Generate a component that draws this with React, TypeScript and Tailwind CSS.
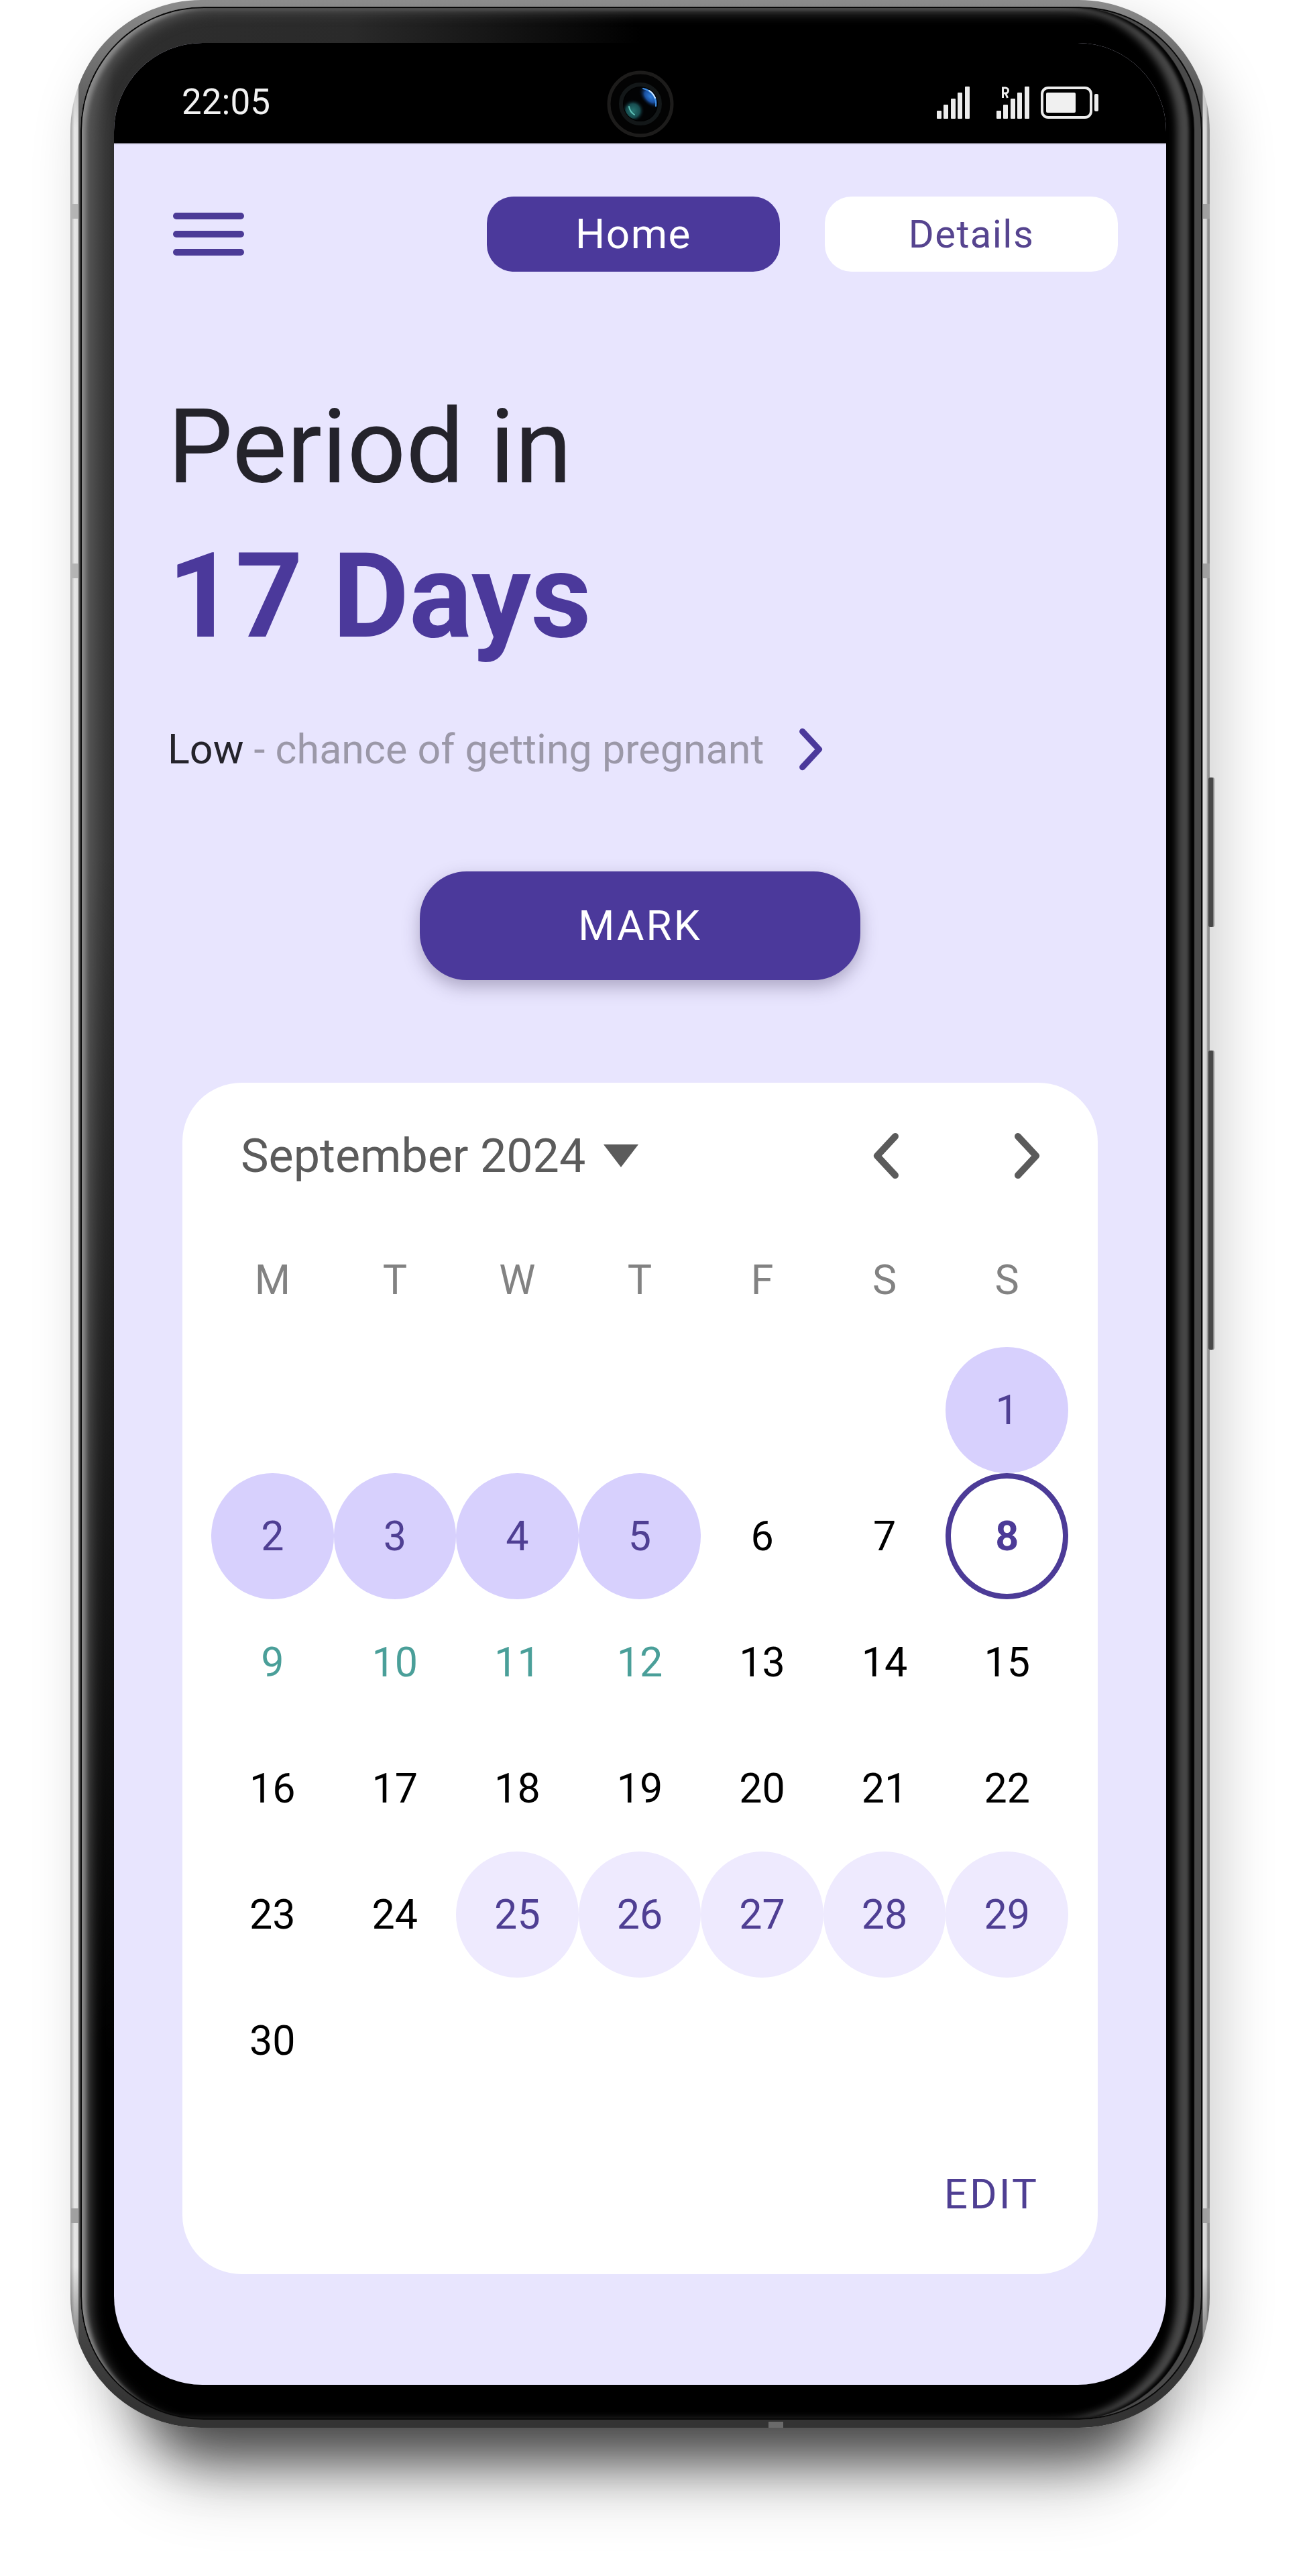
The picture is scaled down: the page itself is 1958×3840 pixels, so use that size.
import React from 'react';

type DayKind = 'plain' | 'period' | 'today' | 'fertile' | 'predicted';

const kinds: Record<number, DayKind> = {
  1: 'period', 2: 'period', 3: 'period', 4: 'period', 5: 'period',
  8: 'today',
  9: 'fertile', 10: 'fertile', 11: 'fertile', 12: 'fertile',
  25: 'predicted', 26: 'predicted', 27: 'predicted', 28: 'predicted', 29: 'predicted',
};

const kindClasses: Record<DayKind, string> = {
  plain: 'text-black',
  period: 'bg-[#d7d0fd] text-[#4f3f93]',
  today: 'border-8 border-[#4c3b97] font-bold text-[#4c3b97]',
  fertile: 'text-[#4a9f99]',
  predicted: 'bg-[#eeeafe] text-[#4f3f93]',
};

const weekdays = [
  ['M', 'Monday'], ['T', 'Tuesday'], ['W', 'Wednesday'], ['T', 'Thursday'],
  ['F', 'Friday'], ['S', 'Saturday'], ['S', 'Sunday'],
];

// September 2024 starts on a Sunday, so the first Monday-based week has six blanks.
const LEADING_BLANKS = 6;
const DAYS_IN_MONTH = 30;
const weeks = Array.from({ length: 6 }, (_, w) =>
  Array.from({ length: 7 }, (_, d) => {
    const day = w * 7 + d + 1 - LEADING_BLANKS;
    return day >= 1 && day <= DAYS_IN_MONTH ? day : null;
  }),
);

function SignalIcon({ roaming = false }: { roaming?: boolean }) {
  return (
    <svg width="49" height="48" viewBox="0 0 49 48" fill="#ececec" aria-hidden="true">
      <rect x="0" y="36" width="7" height="12" rx="1" />
      <rect x="10" y="27" width="7" height="21" rx="1" />
      <rect x="21" y="18" width="7" height="30" rx="1" />
      <rect x="31" y="9" width="7" height="39" rx="1" />
      <rect x="42" y="0" width="7" height="48" rx="1" />
      {roaming && (
        <path d="M9.500 17V2h4a3.500 3.500 0 0 1 0 8h-4m4 0 3 7" fill="none" stroke="#ececec" strokeWidth="3" />
      )}
    </svg>
  );
}

function BatteryIcon() {
  return (
    <svg width="87" height="48" viewBox="0 0 87 48" aria-hidden="true">
      <rect x="2" y="2" width="73" height="44" rx="9" fill="none" stroke="#ececec" strokeWidth="4" />
      <rect x="8" y="9" width="44" height="30" rx="2" fill="#f0f0f0" />
      <rect x="80" y="11" width="6" height="26" rx="2" fill="#ececec" />
    </svg>
  );
}

function Camera() {
  return (
    <svg
      className="absolute top-[41px] left-1/2 -translate-x-1/2"
      width="100"
      height="100"
      viewBox="0 0 100 100"
      aria-hidden="true"
    >
      <defs>
        <radialGradient id="lensBlue" cx="0.8" cy="0.28" r="0.42" gradientTransform="rotate(45 0.8 0.28) scale(1 0.62) translate(0 0.17)">
          <stop offset="0" stopColor="#2f7fdc" />
          <stop offset="0.5" stopColor="#1a4f9e" />
          <stop offset="1" stopColor="#04080f" stopOpacity="0" />
        </radialGradient>
        <radialGradient id="lensTeal" cx="0.28" cy="0.7" r="0.34">
          <stop offset="0" stopColor="#267572" />
          <stop offset="0.6" stopColor="#174c4f" />
          <stop offset="1" stopColor="#04080f" stopOpacity="0" />
        </radialGradient>
      </defs>
      <circle cx="50" cy="50" r="47" fill="#030303" stroke="#1d1c1b" strokeWidth="5" />
      <circle cx="50" cy="50" r="29" fill="#000" stroke="#131718" strokeWidth="6" />
      <circle cx="50" cy="50" r="25" fill="#020304" />
      <circle cx="50" cy="50" r="25" fill="url(#lensTeal)" />
      <circle cx="50" cy="50" r="25" fill="url(#lensBlue)" />
      <path d="M54 27a24 24 0 0 1 19 26" fill="none" stroke="#3f8fe6" strokeWidth="2" strokeLinecap="round" />
      <path d="M63 30a24 24 0 0 1 9 11" fill="none" stroke="#d3eaff" strokeWidth="2" strokeLinecap="round" />
      <path d="M33 54a18 18 0 0 0 8 12" fill="none" stroke="#5fc0b6" strokeWidth="2" strokeLinecap="round" />
    </svg>
  );
}

function Chevron({ className, flip = false }: { className: string; flip?: boolean }) {
  return (
    <svg
      className={className}
      viewBox="0 0 40 72"
      fill="none"
      stroke="currentColor"
      strokeWidth="10"
      strokeLinecap="round"
      strokeLinejoin="round"
      aria-hidden="true"
    >
      <path d={flip ? 'M34 7 7 36l27 29' : 'M6 7l27 29L6 65'} />
    </svg>
  );
}

function StatusBar() {
  return (
    <div className="relative flex h-[149px] items-center justify-between bg-black pt-[28px] pr-[100px] pl-[101px]">
      <span className="text-[53px] leading-none text-[#f2f2f2]">22:05</span>
      <Camera />
      <div className="flex items-center">
        <SignalIcon />
        <span className="ml-[40px] flex"><SignalIcon roaming /></span>
        <span className="ml-[17px] flex"><BatteryIcon /></span>
      </div>
    </div>
  );
}

function Calendar() {
  return (
    <section className="mx-[102px] mt-[153px] rounded-[88px] bg-white pt-[73px] pr-[44px] pb-[83px] pl-[43px]">
      <div className="flex h-[72px] items-center justify-between pr-[41px] pl-[44px] text-[#5b5b5b]">
        <button type="button" className="flex items-center gap-[27px] text-[70px] leading-[72px]">
          September 2024
          <svg width="52" height="34" viewBox="0 0 52 34" fill="currentColor" aria-hidden="true">
            <path d="M0 0h52L26 34z" />
          </svg>
        </button>
        <div className="flex items-center gap-[171px]">
          <button type="button" aria-label="Previous month">
            <Chevron className="h-[72px] w-[40px]" flip />
          </button>
          <button type="button" aria-label="Next month">
            <Chevron className="h-[72px] w-[40px]" />
          </button>
        </div>
      </div>

      <table className="mt-[113px] w-full table-fixed border-collapse text-[61px] leading-[72px]">
        <thead>
          <tr>
            {weekdays.map(([short, full]) => (
              <th key={full} scope="col" abbr={full} className="p-0 pb-[64px] text-center font-normal text-[#828282]">
                {short}
              </th>
            ))}
          </tr>
        </thead>
        <tbody>
          {weeks.map((week, w) => (
            <tr key={w}>
              {week.map((day, d) => (
                <td key={d} className="h-[188px] p-0 text-center">
                  {day !== null && (
                    <button
                      type="button"
                      className={`block h-[188px] w-full rounded-[50%] ${kindClasses[kinds[day] ?? 'plain']}`}
                    >
                      {day}
                    </button>
                  )}
                </td>
              ))}
            </tr>
          ))}
        </tbody>
      </table>

      <div className="mt-[99px] flex justify-end pr-[44px]">
        <button type="button" className="text-[62px] leading-[72px] tracking-wider text-[#4f3f93]">
          EDIT
        </button>
      </div>
    </section>
  );
}

function Screen() {
  return (
    <div className="overflow-hidden rounded-[132px] bg-[#e8e5fe] pb-[165px]">
      <StatusBar />
      <header className="flex items-center justify-between border-t-2 border-[#8b8998] pt-[78px] pr-[72px] pl-[88px]">
        <button type="button" aria-label="Menu">
          <svg width="106" height="64" viewBox="0 0 106 64" stroke="#4c3b97" strokeWidth="10" strokeLinecap="round" aria-hidden="true">
            <path d="M5 5h96M5 32h96M5 59h96" />
          </svg>
        </button>
        <nav className="flex gap-[67px]">
          <button type="button" className="h-[112px] w-[437px] rounded-[40px] bg-[#4b399b] text-[62px] leading-none tracking-wide text-white">
            Home
          </button>
          <button type="button" className="h-[112px] w-[437px] rounded-[40px] bg-white text-[58px] leading-none tracking-wide text-[#56448f]">
            Details
          </button>
        </nav>
      </header>

      <main>
        <h1 className="mt-[172px] pl-[80px]">
          <span className="block text-[154px] leading-[180px] text-[#24232b]">Period in</span>
          <span className="mt-[26px] block text-[176px] leading-[212px] font-bold text-[#4b399b]">17 Days</span>
        </h1>
        <div className="mt-[86px] flex items-center gap-[52px] pl-[80px]">
          <p className="text-[61px] leading-[72px] text-[#9b98a8]">
            <span className="text-[#24232b]">Low</span> - chance of getting pregnant
          </p>
          <button type="button" aria-label="More about pregnancy chance" className="text-[#4b399b]">
            <Chevron className="h-[66px] w-[37px]" />
          </button>
        </div>
        <div className="mt-[146px] flex justify-center">
          <button
            type="button"
            className="h-[162px] w-[657px] rounded-[70px] bg-[#4b399b] text-[62px] leading-none tracking-wider text-white shadow-[0_10px_26px_rgba(60,50,90,0.35)]"
          >
            MARK
          </button>
        </div>
        <Calendar />
      </main>
    </div>
  );
}

export default function App() {
  return (
    <div className="min-h-screen overflow-hidden bg-white pb-[221px] font-['Roboto',sans-serif]">
      <div className="relative mr-[154px] ml-[105px] rounded-[195px] bg-[linear-gradient(to_bottom,#8c8c8c_0,transparent_190px,transparent_calc(100%-240px),#333_calc(100%-30px)),linear-gradient(to_right,#a0a0a0_0,#c4c4c4_3px,#e6e6e6_6px,#e0e0e0_11px,#555_13px,#444_50%,#444_calc(100%-11px),#dedede_calc(100%-10px),#d4d4d4_calc(100%-5px),#8f8f8f_calc(100%-3px))] pt-[10px] pr-[11px] pb-[12px] pl-[15px] shadow-[10px_150px_80px_-110px_rgba(0,0,0,0.55),0_190px_110px_-120px_rgba(0,0,0,0.3),20px_30px_80px_rgba(0,0,0,0.18)]">
        <div className="absolute top-[1159px] -right-[7px] h-[223px] w-[9px] rounded-[3px] border-r-2 border-[#8a8a8a] bg-[#484848]" />
        <div className="absolute top-[1566px] -right-[7px] h-[446px] w-[9px] rounded-[3px] border-r-2 border-[#8a8a8a] bg-[#484848]" />
        <div className="absolute top-[304px] left-px h-[22px] w-[11px] bg-[#b4b4b4]" />
        <div className="absolute top-[840px] left-px h-[22px] w-[11px] bg-[#b4b4b4]" />
        <div className="absolute top-[3292px] left-px h-[22px] w-[11px] bg-[#a0a0a0]" />
        <div className="absolute top-[304px] right-0 h-[22px] w-[10px] bg-[#a0a0a0]" />
        <div className="absolute top-[840px] right-0 h-[22px] w-[10px] bg-[#a0a0a0]" />
        <div className="absolute top-[3292px] right-0 h-[22px] w-[10px] bg-[#a0a0a0]" />
        <div className="absolute right-[636px] bottom-0 h-[9px] w-[22px] bg-[#6a6a6a]" />
        <div className="rounded-[184px] bg-black bg-[linear-gradient(to_bottom,transparent_35%,#000_85%),linear-gradient(to_right,#505050_8px,#2e2e2e_50px,#2a2a2a_400px,#000_50%)] pt-[54px] pr-[54px] pb-[52px] pl-[50px] shadow-[inset_0_0_0_2px_#080808,inset_-12px_0_1px_#4a4a4a,inset_-20px_0_5px_#030303,inset_-38px_0_12px_#484848,inset_10px_4px_6px_-2px_#8a8a8a,inset_20px_12px_20px_-6px_#585858]">
          <Screen />
        </div>
      </div>
    </div>
  );
}
